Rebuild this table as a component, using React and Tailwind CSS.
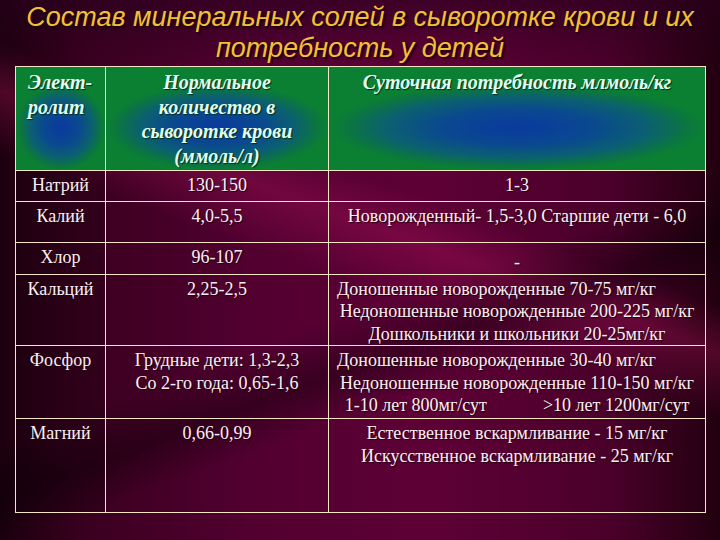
import React from 'react';

const rows = [
  { name: 'Натрий', h: 'h-[31px]', norm: ['130-150'], need: [{ t: '1-3' }] },
  {
    name: 'Калий',
    h: 'h-[41px]',
    norm: ['4,0-5,5'],
    need: [{ t: 'Новорожденный- 1,5-3,0 Старшие дети - 6,0' }]
  },
  { name: 'Хлор', h: 'h-[31px]', norm: ['96-107'], need: [{ t: '-' }], pad: 'pt-[8px]' },
  {
    name: 'Кальций',
    h: 'h-[71px]',
    norm: ['2,25-2,5'],
    need: [
      { t: 'Доношенные новорожденные 70-75 мг/кг', left: true },
      { t: 'Недоношенные новорожденные 200-225 мг/кг' },
      { t: 'Дошкольники и школьники 20-25мг/кг' }
    ]
  },
  {
    name: 'Фосфор',
    h: 'h-[73px]',
    norm: ['Грудные дети: 1,3-2,3', 'Со 2-го года: 0,65-1,6'],
    need: [
      { t: 'Доношенные новорожденные 30-40 мг/кг', left: true },
      { t: 'Недоношенные новорожденные 110-150 мг/кг' },
      { t: 'split' }
    ]
  },
  {
    name: 'Магний',
    h: 'h-[94px]',
    norm: ['0,66-0,99'],
    need: [
      { t: 'Естественное вскармливание - 15 мг/кг' },
      { t: 'Искусственное вскармливание - 25 мг/кг' }
    ]
  }
];

const headBg =
  'bg-[radial-gradient(ellipse_closest-side_at_50%_58%,#0a3a9e_0%,#0a4890_40%,#0b6070_70%,#0b7640_90%,#0b8032_100%)] bg-[#0b8032]';

const cell = "border border-[#f2e6c6] align-top font-['Liberation_Serif','Times_New_Roman',serif]";

const App = () => {
  return (
    <div className="w-[720px] h-[540px] overflow-hidden relative bg-[linear-gradient(90deg,#1c000e_0%,#3a0020_12%,#520030_35%,#5e0036_60%,#4a002a_85%,#22000f_100%)]">
      {/* background streaks */}
      <div className="absolute inset-0 bg-[linear-gradient(200deg,transparent_0%,transparent_38%,rgba(170,20,90,0.35)_44%,transparent_52%,transparent_100%)]" />
      <div className="absolute inset-0 bg-[linear-gradient(160deg,transparent_0%,transparent_55%,rgba(0,0,0,0.35)_62%,transparent_68%,transparent_100%)]" />
      <div className="absolute inset-0 bg-[linear-gradient(180deg,rgba(40,0,30,0.6)_0%,transparent_12%,transparent_100%)]" />

      <div className="relative flex flex-col">
        {/* Title */}
        <div className="h-[66px] pt-[2px] text-center italic text-[27px] leading-[31px] text-[#f2c034] font-['Liberation_Sans',Arial,sans-serif] [text-shadow:2px_2px_2px_#1a0008]">
          <div>Состав минеральных солей в сыворотке крови и их</div>
          <div>потребность у детей</div>
        </div>

        {/* Table */}
        <table className="ml-[15px] w-[690px] border-collapse table-fixed font-serif">
          <colgroup>
            <col className="w-[90px]" />
            <col className="w-[223px]" />
            <col className="w-[377px]" />
          </colgroup>
          <thead>
            <tr className="h-[104px] text-[20px] leading-[24.5px] italic text-[#e2fff0] [text-shadow:1px_1px_1px_#00301a]">
              <th className={`${cell} text-left pl-[12px] pt-[3px] font-bold ${headBg}`}>
                Элект-
                <br />
                ролит
              </th>
              <th className={`${cell} text-center pt-[3px] font-bold ${headBg}`}>
                Нормальное
                <br />
                количество в
                <br />
                сыворотке крови
                <br />
                (ммоль/л)
              </th>
              <th className={`${cell} text-center pt-[3px] font-bold ${headBg}`}>
                Суточная потребность млмоль/кг
              </th>
            </tr>
          </thead>
          <tbody className="text-[18px] leading-[22.5px] text-[#fbeef2] [text-shadow:1px_1px_1px_#200010]">
            {rows.map((r) => (
              <tr key={r.name} className={r.h}>
                <td className={`${cell} text-center pt-[3px] bg-[rgba(20,0,10,0.25)]`}>{r.name}</td>
                <td className={`${cell} text-center pt-[3px]`}>
                  {r.norm.map((n) => (
                    <div key={n}>{n}</div>
                  ))}
                </td>
                <td className={`${cell} ${r.pad || 'pt-[3px]'}`}>
                  {r.need.map((n, i) =>
                    n.t === 'split' ? (
                      <div key={i} className="text-center">
                        1-10 лет 800мг/сут<span className="inline-block w-[56px]" />&gt;10 лет 1200мг/сут
                      </div>
                    ) : (
                      <div key={i} className={n.left ? 'text-left pl-[8px]' : 'text-center'}>
                        {n.t}
                      </div>
                    )
                  )}
                </td>
              </tr>
            ))}
          </tbody>
        </table>
      </div>
    </div>
  );
};

export default App;
